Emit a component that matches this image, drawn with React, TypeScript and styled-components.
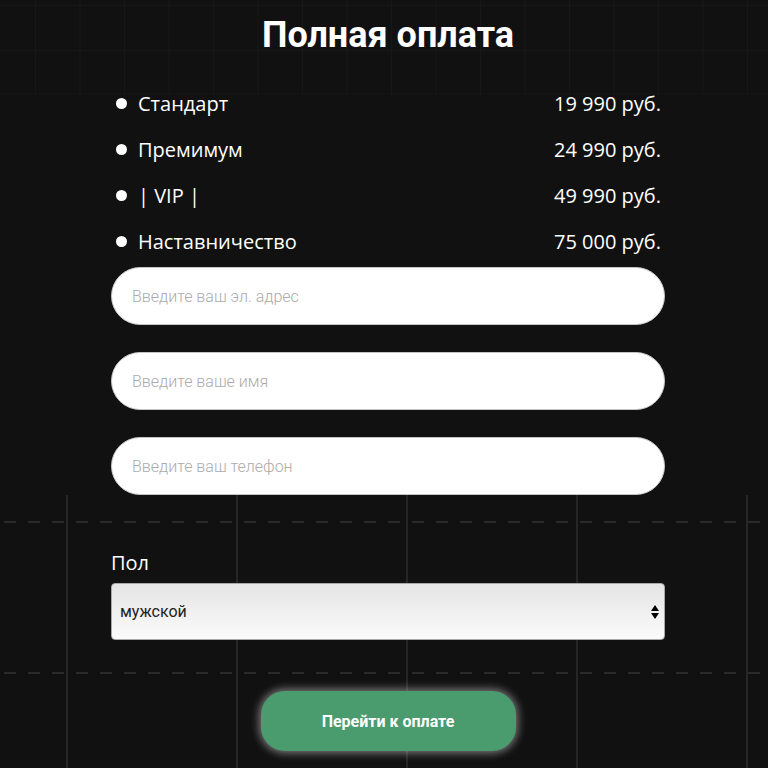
import { useState } from 'react'
import styled, { createGlobalStyle } from 'styled-components'

const GlobalStyle = createGlobalStyle`
    html, body {
        margin: 0;
        padding: 0;
        background: #111111;
    }
    * {
        box-sizing: border-box;
    }
`

const Page = styled.div`
    min-height: 100vh;
    padding: 15px 0 0 8px;
    background-color: #111111;
    background-image:
        linear-gradient(to right, #2a2a2a 0 12px, transparent 12px),
        linear-gradient(to right, #2a2a2a 0 12px, transparent 12px),
        linear-gradient(to right, #262626 0 2px, transparent 2px),
        linear-gradient(to right, #171717 0 1px, transparent 1px),
        linear-gradient(#171717, #171717),
        linear-gradient(#171717, #171717),
        linear-gradient(#141414, #141414);
    background-size:
        24px 2px,
        24px 2px,
        170px 100%,
        44.5px 95px,
        100% 1px,
        100% 1px,
        100% 1px;
    background-position:
        4px 521px,
        4px 672px,
        66px 495px,
        35px 0,
        0 5px,
        0 50px,
        0 93px;
    background-repeat: repeat-x, repeat-x, repeat-x, repeat-x, no-repeat, no-repeat, no-repeat;
`

const Form = styled.form`
    width: 554px;
    margin: 0 auto;
    display: flex;
    flex-direction: column;
`

const Title = styled.h2`
    margin: 0 0 25px;
    font-family: Roboto, 'Liberation Sans', sans-serif;
    font-weight: 700;
    font-size: 36px;
    line-height: 40px;
    color: #ffffff;
    text-align: center;
`

const PlanList = styled.ul`
    list-style: none;
    margin: 0 0 3px;
    padding: 0 4px 0 5px;
`

const PlanRow = styled.li`
    height: 46px;
    display: flex;
    align-items: center;
    justify-content: space-between;
    font-family: 'Open Sans', 'Noto Sans', sans-serif;
    font-size: 20px;
    color: #ffffff;
`

const PlanName = styled.span`
    display: flex;
    align-items: center;
    gap: 11px;
    &::before {
        content: '';
        width: 11px;
        height: 11px;
        border-radius: 50%;
        background: #ffffff;
    }
`

const Fields = styled.div`
    display: flex;
    flex-direction: column;
    gap: 27px;
`

const TextField = styled.input`
    width: 100%;
    height: 58px;
    padding: 0 20px;
    border: 1px solid #c4c4c4;
    border-radius: 29px;
    background: #ffffff;
    font-family: Roboto, 'Liberation Sans', sans-serif;
    font-weight: 300;
    font-size: 16px;
    color: #222222;
    outline: none;
    &::placeholder {
        color: #ababab;
    }
`

const Label = styled.label`
    margin: 54px 0 7px;
    font-family: 'Open Sans', 'Noto Sans', sans-serif;
    font-size: 20px;
    line-height: 27px;
    color: #ffffff;
`

const SelectBox = styled.div`
    position: relative;
    height: 57px;
`

const Select = styled.select`
    appearance: none;
    width: 100%;
    height: 100%;
    padding: 0 30px 0 8px;
    border: 1px solid #a8a8a8;
    border-radius: 4px;
    background: linear-gradient(#e4e4e4, #fbfbfb);
    font-family: Roboto, 'Liberation Sans', sans-serif;
    font-size: 16px;
    color: #222222;
    outline: none;
`

const Arrows = styled.svg`
    position: absolute;
    right: 6px;
    top: 50%;
    transform: translateY(-50%);
    pointer-events: none;
`

const PayButton = styled.button`
    align-self: center;
    width: 255px;
    height: 60px;
    margin-top: 51px;
    border: none;
    border-radius: 24px;
    background: #4a9b6e;
    box-shadow: 0 0 8px 2px rgba(255, 255, 255, 0.45);
    font-family: Roboto, 'Liberation Sans', sans-serif;
    font-weight: 700;
    font-size: 16px;
    color: #ffffff;
    cursor: pointer;
`

const plans = [
    { name: 'Стандарт', price: '19 990 руб.' },
    { name: 'Премимум', price: '24 990 руб.' },
    { name: '| VIP |', price: '49 990 руб.' },
    { name: 'Наставничество', price: '75 000 руб.' },
]

export default function App() {
    const [gender, setGender] = useState('male')

    return (
        <Page>
            <GlobalStyle />
            <Form onSubmit={(e: any) => e.preventDefault()}>
                <Title>Полная оплата</Title>
                <PlanList>
                    {plans.map((p) => (
                        <PlanRow key={p.name}>
                            <PlanName>{p.name}</PlanName>
                            <span>{p.price}</span>
                        </PlanRow>
                    ))}
                </PlanList>

                <Fields>
                    <TextField type="email" placeholder="Введите ваш эл. адрес" />
                    <TextField type="text" placeholder="Введите ваше имя" />
                    <TextField type="tel" placeholder="Введите ваш телефон" />
                </Fields>

                <Label htmlFor="gender">Пол</Label>
                <SelectBox>
                    <Select
                        id="gender"
                        value={gender}
                        onChange={(e: any) => setGender(e.target.value)}
                    >
                        <option value="male">мужской</option>
                        <option value="female">женский</option>
                    </Select>
                    <Arrows width="8" height="14" viewBox="0 0 8 14">
                        <path d="M4 0 L8 6 L0 6 Z" fill="#000" />
                        <path d="M0 8 L8 8 L4 14 Z" fill="#000" />
                    </Arrows>
                </SelectBox>

                <PayButton type="submit">Перейти к оплате</PayButton>
            </Form>
        </Page>
    )
}
